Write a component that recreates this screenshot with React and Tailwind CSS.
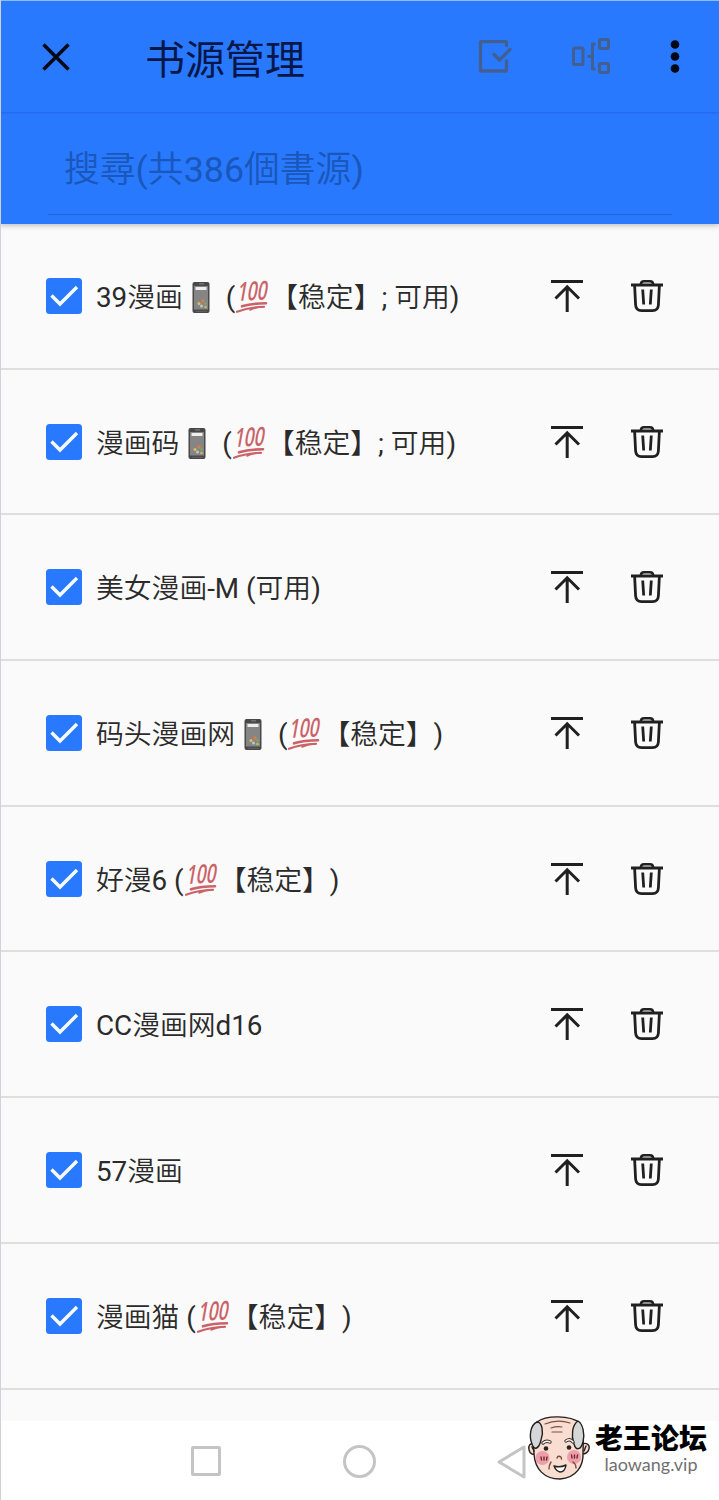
const sources = [
	["39漫画", "phone", " (", "100", "【稳定】; 可用)"],
	["漫画码", "phone", " (", "100", "【稳定】; 可用)"],
	["美女漫画-M (可用)"],
	["码头漫画网", "phone", " (", "100", "【稳定】)"],
	["好漫6 (", "100", "【稳定】)"],
	["CC漫画网d16"],
	["57漫画"],
	["漫画猫 (", "100", "【稳定】)"],
];

function PhoneEmoji() {
	return (
		<svg viewBox="0 0 36 34" className="-mt-[2px] w-9 h-[34px] shrink-0">
			<rect x="9.5" y="2" width="17" height="31" rx="2" fill="#484848" />
			<rect x="11" y="6" width="14" height="23.5" fill="#858585" />
			<rect x="12.5" y="7" width="11" height="3" fill="#eeeeee" />
			<path d="M16 3.9h5" stroke="#888" strokeWidth="1" />
			<circle cx="20" cy="21" r="1.7" fill="#df7a42" />
			<circle cx="16" cy="23.5" r="1.5" fill="#dfbf55" />
			<circle cx="22.5" cy="23.5" r="1.6" fill="#69a681" />
			<circle cx="18.5" cy="26" r="1.5" fill="#b8c6d0" />
			<circle cx="22.5" cy="27" r="1.3" fill="#d9b04e" />
			<path d="M13 31.3h11" stroke="#666" strokeWidth="1" />
		</svg>
	);
}

function HundredEmoji() {
	return (
		<svg
			viewBox="0 0 35 34"
			className="-mt-[3px] w-[35px] h-[34px] shrink-0 overflow-visible"
			fill="none"
			stroke="#cb6268"
			strokeLinecap="round"
		>
			<text
				x="0"
				y="0"
				transform="translate(1.5 22) rotate(-3) skewX(-13)"
				textLength="30"
				lengthAdjust="spacingAndGlyphs"
				fill="#cb6268"
				stroke="none"
				className="font-['Open_Sans'] text-[26px] font-semibold"
			>
				100
			</text>
			<path d="M7 27.3Q17 24.3 31 24.3" strokeWidth="2.6" />
			<path d="M2 32.8Q14 28 29 27.7" strokeWidth="2.1" />
			<path d="M15 31Q21 28 29 27.7" strokeWidth="1.6" />
		</svg>
	);
}

function SourceName({ parts }) {
	return (
		<div className="ml-[14px] flex flex-1 items-center whitespace-pre pt-[4px] text-[27.8px] leading-10 text-[#2b2b2b] [text-spacing-trim:space-all]">
			{parts.map((part, i) => {
				if (part === "phone") return <PhoneEmoji key={i} />;
				if (part === "100") return <HundredEmoji key={i} />;
				return <span key={i}>{part}</span>;
			})}
		</div>
	);
}

function SourceRow({ parts }) {
	return (
		<div className="flex h-[145.7px] items-center border-b-2 border-[#dedede] pl-[45px] pr-[55px]">
			<svg viewBox="0 0 36 36" className="size-9 shrink-0">
				<rect width="36" height="36" rx="3.5" fill="#2979ff" />
				<path d="M5.5 17.5L14 26L31 9" fill="none" stroke="#f5fbff" strokeWidth="3.4" />
			</svg>
			<SourceName parts={parts} />
			<svg
				viewBox="0 0 32 34"
				className="mr-[47px] h-[34px] w-8 shrink-0"
				fill="none"
				stroke="#202020"
				strokeWidth="3"
			>
				<path d="M0 2.5H32M16.2 33V7.5M4.5 19.5L16.2 7.8L28 19.5" />
			</svg>
			<svg
				viewBox="0 0 34 34"
				className="size-[34px] shrink-0"
				fill="none"
				stroke="#202020"
				strokeWidth="2.8"
			>
				<path d="M1 6H33M4.6 6L5.6 26Q6 31.6 11.5 31.6H22.5Q28 31.6 28.4 26L29.4 6" />
				<path d="M10.8 5.5Q11 2.2 14 2.2H20Q23 2.2 23.2 5.5" strokeWidth="2.5" />
				<path d="M12.7 10.5L13.7 25.5M21.3 10.5L20.3 25.5" />
			</svg>
		</div>
	);
}

function OldManLogo() {
	return (
		<svg
			viewBox="0 0 64 66"
			className="h-[66px] w-16 shrink-0"
			fill="none"
			stroke="#251f1d"
			strokeWidth="1.4"
			strokeLinecap="round"
			strokeLinejoin="round"
		>
			<path d="M8 29C3 27 1 31 2 35C3 39 6 40 9 39M55 29C60 27 63 30 62 34C61 38 57 40 54 38" fill="#f8ddd0" />
			<path d="M10 7C19 0 43 0 53 8C58 18 56 29 56 37C57 51 49 63 33 64C17 64 8 54 7 39C7 29 3 17 10 7Z" fill="#f8ddd0" />
			<path d="M10 7C15 7 17 17 14 25C12 34 7 36 5 29C2 22 3 10 10 7ZM51 6C45 10 44 21 47 29C49 36 54 35 56 27C58 19 56 9 51 6Z" fill="#d5d6d8" />
			<circle cx="15.5" cy="43" r="7" fill="#ee9eaa" stroke="none" />
			<circle cx="47" cy="42" r="7" fill="#ee9eaa" stroke="none" />
			<path d="M18 9Q30 4 43 8M24 13Q30 11 35 12M25 17H35" stroke="#795143" strokeWidth="1.2" />
			<path d="M16 28Q19 25 23 27M39 26Q43 23 46 27" stroke="#39302c" strokeWidth="3.4" />
			<path d="M16 28Q19 25 23 27M39 26Q43 23 46 27" stroke="#f7f5f3" strokeWidth="1.5" />
			<circle cx="19" cy="33.5" r="2.3" fill="#29211e" stroke="none" />
			<circle cx="42" cy="32.5" r="2.3" fill="#29211e" stroke="none" />
			<path d="M14 42L14.5 45M17 42L17 45M20 42L19.5 45M44.5 40L45 43M47.5 40V43M50.5 40L50 43" stroke="#6d2932" />
			<path d="M30 43Q31 40 34 42L34.5 44M24 47Q22 50 22 54M46 47Q49 49 49 53" stroke="#7b4c3d" />
			<path d="M27 51Q33 53 39 50Q38 57 33 57Q29 56 27 51Z" fill="#fff" />
			<path d="M5 32L7 36M59 31L57 36" />
		</svg>
	);
}

export default function App() {
	return (
		<div className="relative flex h-[1500px] w-[719px] flex-col overflow-hidden border-l border-[#d0d2d8] bg-[#fafafa] font-[Roboto,'Noto_Sans_CJK_SC_DemiLight','Noto_Sans_CJK_SC',sans-serif] font-[370]">
			<header className="relative z-10 -ml-px h-56 shrink-0 bg-[#2979ff] pl-px shadow-[0_2px_5px_rgba(0,0,0,0.22)]">
				<div className="-ml-px flex h-28 items-center border-t border-[#8bbcff] pl-[42px] pr-[39px] shadow-[0_1px_2px_rgba(0,35,140,0.2)]">
					<svg viewBox="0 0 28 28" className="size-7" stroke="#050914" strokeWidth="3.5">
						<path d="M1.5 1.5L26.5 26.5M26.5 1.5L1.5 26.5" />
					</svg>
					<h1 className="ml-[75px] flex-1 pt-2 font-[Roboto,'Noto_Sans_CJK_SC',sans-serif] text-[40px] leading-none font-normal text-[#071749]">
						书源管理
					</h1>
					<svg
						viewBox="0 0 34 34"
						className="mr-[59px] size-[34px]"
						fill="none"
						stroke="#435f8f"
						strokeWidth="3.3"
						strokeLinecap="round"
						strokeLinejoin="round"
					>
						<path d="M28.5 5.5V2.5Q28.5 1.5 27.5 1.5H3.5Q2.5 1.5 2.5 2.5V30Q2.5 31 3.5 31H27.5Q28.5 31 28.5 30V21M16 14.5L21.5 20L32 9.5" />
					</svg>
					<svg
						viewBox="0 0 40 38"
						className="mr-[59px] h-[38px] w-10"
						fill="none"
						stroke="#435f8f"
						strokeWidth="3"
						strokeLinejoin="round"
					>
						<rect x="2.5" y="10" width="9.5" height="16.5" rx="1" />
						<rect x="28.5" y="1.5" width="9" height="9" rx="1" />
						<rect x="28.5" y="25.5" width="9" height="9" rx="1" />
						<path d="M24.5 6H21.5V31H24.5M21.5 18.5H16.5" />
					</svg>
					<svg viewBox="0 0 10 34" className="h-[34px] w-2.5" fill="#030817">
						<circle cx="5" cy="4.5" r="4.3" />
						<circle cx="5" cy="16.5" r="4.3" />
						<circle cx="5" cy="28.5" r="4.3" />
					</svg>
				</div>
				<div className="ml-[47px] mr-[47px] flex h-[103px] items-center border-b border-[#2167df] pl-4 pt-[16px] font-[Roboto,'Noto_Sans_CJK_TC_DemiLight','Noto_Sans_CJK_TC',sans-serif] text-[35.8px] text-[#1a57ba]">
					搜尋(共386個書源)
				</div>
			</header>
			<main className="h-[1197px] shrink-0 overflow-hidden">
				{sources.map((parts) => (
					<SourceRow key={parts[0]} parts={parts} />
				))}
			</main>
			<nav className="flex flex-1 items-start bg-white pl-[190px] pt-[24px]">
				<div className="mt-[1px] size-[30px] rounded-xs border-[3px] border-[#c4c4c4]" />
				<div className="ml-[122px] size-[33px] rounded-full border-[3px] border-[#c4c4c4]" />
				<svg
					viewBox="0 0 30 35"
					className="ml-[121px] h-[35px] w-[30px]"
					fill="none"
					stroke="#c4c4c4"
					strokeWidth="3"
					strokeLinejoin="round"
				>
					<path d="M2 17L27 2V32Z" />
				</svg>
			</nav>
			<div className="absolute bottom-[19px] right-[12px] z-20 flex">
				<OldManLogo />
				<div className="ml-1 flex w-[112px] flex-col items-center pt-[9px]">
					<div className="font-[Roboto,'Noto_Sans_CJK_SC',sans-serif] text-[28px] leading-[32px] font-black text-black">
						老王论坛
					</div>
					<div className="-mt-[2px] font-[Lato] text-[18px] leading-5 font-normal text-[#707070]">
						laowang.vip
					</div>
				</div>
			</div>
		</div>
	);
}
